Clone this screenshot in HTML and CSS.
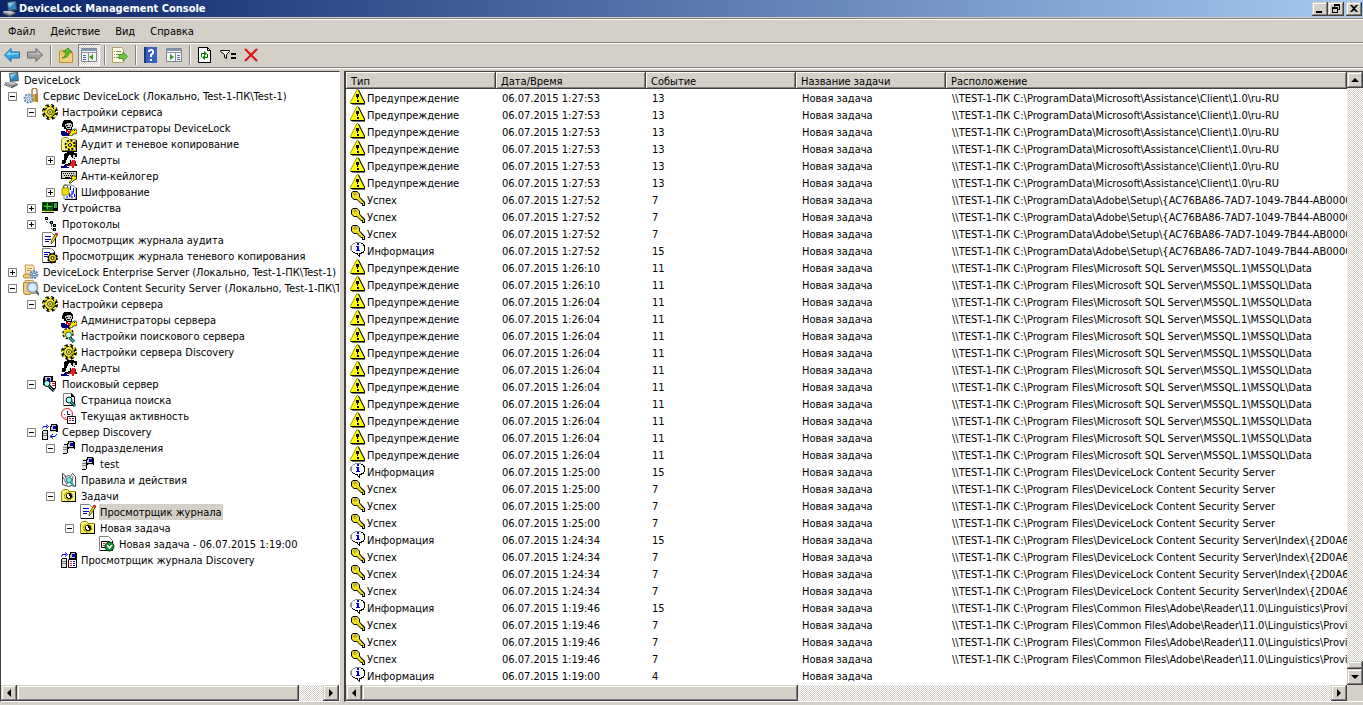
FILE: index.html
```html
<!DOCTYPE html>
<html lang="ru">
<head>
    <meta charset="UTF-8">
    <meta name="viewport" content="width=device-width, initial-scale=1.0">
    <title>DeviceLock Management Console</title>
    <link rel="stylesheet" href="styles.css">
</head>
<body>
    <!-- icon sprite -->
    <svg class="sprite" aria-hidden="true">
        <symbol id="i-pc" viewBox="0 0 16 16"><path d="M5 1l9-1 1 9-9 1z" fill="#555"/><path d="M6 2l7-1 1 7-7 1z" fill="#2f88c0"/><path d="M6 2l7-1-6 6z" fill="#7cc4e8"/><path d="M1 10h9l4 2-6 3-7-3z" fill="#8a8a8a"/><path d="M2 10h7l3 2-4 1-6-2z" fill="#c0c0c0"/><path d="M0 12l7 3 7-3v1l-6 3-8-3z" fill="#444"/></symbol>
        <symbol id="i-service" viewBox="0 0 16 16"><path d="M9 6V3q0-3 2.500-3T14 3v3" fill="none" stroke="#a8844c" stroke-width="1.500"/><path d="M7 6h8v8H8z" fill="#d8a850"/><path d="M12 6h3v8h-3z" fill="#b8842c"/><circle cx="5.500" cy="10.500" r="4" fill="#d4e4f4" stroke="#6c8cb0" stroke-width="2" stroke-dasharray="2 1"/><circle cx="5.500" cy="10.500" r="1.500" fill="#fff" stroke="#6c8cb0"/></symbol>
        <symbol id="i-gear" viewBox="0 0 16 16"><circle cx="8" cy="8" r="6.500" fill="none" stroke="#000" stroke-width="3" stroke-dasharray="3.100 2"/><circle cx="8" cy="8" r="6" fill="#000"/><circle cx="8" cy="8" r="6" fill="none" stroke="#e8e000" stroke-width="2.500" stroke-dasharray="2.100 2.610" stroke-dashoffset="1"/><circle cx="8" cy="8" r="5" fill="#f0e840"/><path d="M11 4l2 4-2 4-3 1 3-3V6z" fill="#a09800"/><circle cx="8" cy="8" r="2.500" fill="#fffca0" stroke="#404000"/><path d="M7 7h2v2H7z" fill="#808000"/><path d="M4 4h1v1H4zM11 4h1v1h-1zM4 11h1v1H4zM11 11h1v1h-1z"/></symbol>
        <symbol id="i-admin" viewBox="0 0 16 16"><path d="M2 1h1V0h7v1h1v1h1v5h-1v3H5V9H3V7H1V3h1z"/><path d="M4 4h2V3h4v1h1v3h-1v2H6V8H5V6H4z" fill="#c8c8c8"/><path d="M5 5h2v1H5zM9 5h1v1H9zM6 7h3v1H6z"/><path d="M0 11h4v1h2v1h2v3H1v-1H0z" fill="#000080"/><path d="M5 10h2v1h2v2H7v-1H5z" fill="#f00"/><path d="M9 10h3l1-1h2l1 2v2l-2 1h-2l-1 2H8v-2l2-2z" fill="#f8e800" stroke="#000" stroke-width=".7"/><path d="M13 10h1v1h-1z"/></symbol>
        <symbol id="i-folder-gear" viewBox="0 0 16 16"><path d="M.5 3.500l2-2h4l2 2h6v11H.5z" fill="#f8f4a0" stroke="#909000"/><path d="M15 4h1v12H1v-1h14z"/><circle cx="9" cy="9" r="4.500" fill="#f8e800" stroke="#000" stroke-width="2" stroke-dasharray="2 1.500"/><circle cx="9" cy="9" r="3.500" fill="#f8e800"/><circle cx="9" cy="9" r="1.500" fill="#fff" stroke="#000"/></symbol>
        <symbol id="i-alert" viewBox="0 0 16 16"><path d="M4 1h2V0h7v1h3v4h-2v2h-4v7H4v-2H1V8h2V2h1z"/><path d="M7 4h1V3h2v2h1v3H9v3H7v1H4v-1h1V8h1V6h1z" fill="#f4f4f4"/><path d="M12 3h2v3h-1v1h-2V6h1z" fill="#d8d8d8"/><path d="M0 14h3v-1h3v2h2v1H0z" fill="#000080"/><path d="M11 8h3v1h1v3h1v2h-3v2h-2v-2H8v-1h1v-1h1V9h1z" fill="#e02020"/><path d="M14 9h1v3h1v2h-2z" fill="#800000"/></symbol>
        <symbol id="i-keyboard" viewBox="0 0 16 16"><path d="M0 3h16v8H0z"/><path d="M1 4h14v6H1z" fill="#d4d0c8"/><path d="M2 5.500h12M3 7.500h10" stroke="#000" stroke-dasharray="1 1"/><path d="M4 9h5v1H4z"/><path d="M10 8h5l1 3-3 1-3 3H8l3-4z" fill="#f8e800" stroke="#000" stroke-width=".7"/></symbol>
        <symbol id="i-crypt" viewBox="0 0 16 16"><path d="M3 1h8l4 3v11H3z" fill="#fff" stroke="#808080"/><path d="M15 4h1v12H4v-1h11z"/><path d="M9 2h1v4H9zM12 4h1v4h-1zM8 9h1v4H8zM13 10h1v3h-1z" fill="#00f"/><path d="M10 8h2v2h-2v3h2M6 12v2" fill="none" stroke="#00f"/><path d="M2.500 5V2l1-1h2l1 1v3" fill="none" stroke="#606000"/><path d="M1 4h7v7H1z" fill="#f0e000" stroke="#808000" stroke-width=".7"/></symbol>
        <symbol id="i-devices" viewBox="0 0 16 16"><path d="M0 2h11v9H0z" fill="#006000"/><path d="M1 3h3v2H1zM6 3h3v2H6zM1 7h3v2H1z" fill="#000"/><path d="M2 6h8v1H2zM5 3h1v6H5z" fill="#40d040"/><path d="M11 2h5v9h-5z"/><path d="M12 3h3v5h-3z" fill="#40a040"/><path d="M3 11h8v1H3z" fill="#e8d800"/><path d="M0 12h12v1H0z"/></symbol>
        <symbol id="i-protocols" viewBox="0 0 16 16"><path d="M4.500 3v3.500H9M9.500 8v5.500H12M9 9.500h3" fill="none" stroke="#606060" stroke-dasharray="1 1"/><path d="M3 1h3v3H3zM8 5h3v3H8zM11 8h3v3h-3zM11 12h3v3h-3z"/><path d="M4 2h1v1H4zM9 6h1v1H9zM12 9h1v1h-1zM12 13h1v1h-1z" fill="#40e0e0"/></symbol>
        <symbol id="i-log" viewBox="0 0 16 16"><path d="M.5 .5h9l4 4v10H.5z" fill="#fff" stroke="#808080"/><path d="M13 5h1v10H1v-1h12z"/><path d="M3 4.500h6M3 7.500h6M3 9.500h4" stroke="#0000c0"/><path d="M14 1l2 1-5 8-2 2 .5-3.500z" fill="#f8e000" stroke="#000" stroke-width=".6"/><path d="M14 1l2 1-1 2-2-1z" fill="#e02020"/></symbol>
        <symbol id="i-shadow-log" viewBox="0 0 16 16"><path d="M.5 .5h9l3 3v11H.5z" fill="#fff" stroke="#808080"/><path d="M12 4h1v11H1v-1h11z"/><path d="M2 4.500h6M2 6.500h4M2 8.500h3" stroke="#0000c0"/><circle cx="10.500" cy="10" r="4.500" fill="#000"/><circle cx="10.500" cy="10" r="4.500" fill="none" stroke="#000" stroke-width="2" stroke-dasharray="2 1.500"/><circle cx="10.500" cy="10" r="3.500" fill="#e8d800"/><circle cx="10.500" cy="10" r="1.500" fill="#fff" stroke="#000"/></symbol>
        <symbol id="i-enterprise" viewBox="0 0 16 16"><path d="M2 1h8q2 1 1 3l1 7H3z" fill="#fbe6b8" stroke="#c09850"/><path d="M0 12q0-2 3-2h6v4H2q-2 0-2-2z" fill="#f0c878" stroke="#b08840"/><path d="M4 4.500h5M4 6.500h4" stroke="#c09850"/><circle cx="11" cy="10.500" r="3.500" fill="#b0d0f0" stroke="#6088b0" stroke-width="2" stroke-dasharray="2 1"/><circle cx="11" cy="10.500" r="1.500" fill="#fff" stroke="#406890"/></symbol>
        <symbol id="i-content" viewBox="0 0 16 16"><path d="M2 .5h8l1 2h3v11H1z" fill="#fbe6b8" stroke="#c09850"/><path d="M.5 2.500h7v12H2q-1 0-1.500-3z" fill="#f0c878" stroke="#b08840"/><circle cx="9.500" cy="7.500" r="5" fill="#d4ecfc" stroke="#8098b0" stroke-width="1.500"/><path d="M13 11l3 4" stroke="#505860" stroke-width="2"/></symbol>
        <symbol id="i-gear-search" viewBox="0 0 16 16"><circle cx="7" cy="5.500" r="4.500" fill="#e8d800" stroke="#000" stroke-width="2.500" stroke-dasharray="2 1.500"/><circle cx="7" cy="5.500" r="4.500" fill="#e8d800"/><circle cx="7.500" cy="7" r="3" fill="#c0ffff" stroke="#405050"/><path d="M9 10l4 4" stroke="#000" stroke-width="3"/><path d="M9 10l4 4" stroke="#30d0d0" stroke-width="1.500"/></symbol>
        <symbol id="i-search-server" viewBox="0 0 16 16"><path d="M2 0h9v9H1V3z"/><path d="M3 1h6v6H3z" fill="#c0c0c0"/><path d="M5 2h3v3H5z" fill="#0000c0"/><path d="M7.500 5.500h6v7h-6z" fill="#fff" stroke="#000"/><path d="M10 7.500h3M10 9.500h3" stroke="#e02020"/><circle cx="5" cy="7.500" r="3" fill="#a0ffff" stroke="#000"/><path d="M7 10l5 5" stroke="#000" stroke-width="3"/><path d="M7 10l5 5" stroke="#20d0d0"/></symbol>
        <symbol id="i-page-search" viewBox="0 0 16 16"><path d="M2.500 1.500h8l3 3v9h-11z" fill="#fff" stroke="#808080"/><path d="M14 5v9H3v-1h10V5zM10 1l4 4h-4z"/><circle cx="8" cy="8" r="3" fill="#a0ffff" stroke="#000"/><path d="M10 10l4 4" stroke="#000" stroke-width="3"/><path d="M10 10l4 4" stroke="#20c0c0" stroke-width="1.500"/></symbol>
        <symbol id="i-activity" viewBox="0 0 16 16"><circle cx="6" cy="6" r="5.500" fill="#fff" stroke="#e02020"/><path d="M6.500 3v3.500H9" fill="none" stroke="#000080"/><path d="M3 6h1v1H3zM4 9h1v1H4z" fill="#e02020"/><path d="M6.500 8.500h8v7h-8z" fill="#fff" stroke="#000"/><path d="M8 10.500h2M8 12.500h2" stroke="#e02020"/><path d="M11 10.500h2M11 12.500h2" stroke="#0000c0"/></symbol>
        <symbol id="i-discovery" viewBox="0 0 16 16"><path d="M9 0h6v1h1v7H8V2h1z"/><path d="M10 1h4v5h-5V3h1z" fill="#c0c0c0"/><path d="M11 2h3v3h-3z" fill="#0000c0"/><path d="M8 7h6v1H8z" fill="#d0d0d0"/><path d="M1 6h5v10H0V7h1z"/><path d="M1 7h4v8H1z" fill="#e0e0e0"/><path d="M1 9.500h4M1 11.500h4" stroke="#808080"/><path d="M.5 4.500l1-2H5M4 .5l2.500 2L4 4.500M15 10l-2 2.500h-4M11 10l-3 2.500 3 2" fill="none" stroke="#00f"/></symbol>
        <symbol id="i-units" viewBox="0 0 16 16"><path d="M7 1h6v1h1v7H6V3h1z"/><path d="M8 2h4v5H7V4h1z" fill="#c0c0c0"/><path d="M9 3h3v3H9z" fill="#0000c0"/><path d="M8 8h5v1H8z" fill="#d0d0d0"/><path d="M3 4h4v9H6v1H2V5h1z"/><path d="M2 5h4v8H2z" fill="#e0e0e0"/><path d="M2 7.500h4M2 9.500h4" stroke="#808080"/></symbol>
        <symbol id="i-rules" viewBox="0 0 16 16"><path d="M1.500 1.500l4 3 2-1 2 1 2-3 3 3v10l-4-1-3 1-6-2z" fill="#fff" stroke="#404040"/><path d="M2 5l4 8M4 4l3 8M12 4l-1 7" fill="none" stroke="#404040" stroke-width=".8"/><circle cx="8" cy="8" r="2.500" fill="#80f0f0" stroke="#208080"/><path d="M9 10l4 4" stroke="#20a0a0" stroke-width="2"/></symbol>
        <symbol id="i-tasks" viewBox="0 0 16 16"><path d="M.5 3.500l2-2h4l2 2h6v10H.5z" fill="#f8f080" stroke="#909000"/><path d="M14 4h1v10H1v-1h13z"/><circle cx="7.500" cy="8" r="4" fill="#f0e000" stroke="#808000" stroke-dasharray="2 1"/><circle cx="8" cy="8" r="3"/><path d="M6 6h2v2h1v2H7V9H6z" fill="#fff"/></symbol>
        <symbol id="i-task-ok" viewBox="0 0 16 16"><path d="M.5 .5h9l4 4v10H.5z" fill="#fff" stroke="#808080"/><path d="M13 5h1v10H1v-1h12z"/><path d="M2.500 5.500h8v6h-8z" fill="#fff" stroke="#000"/><path d="M4 7h2v1H4zM4 9h2v1H4z" fill="#e02020"/><circle cx="10.500" cy="10.500" r="4.500" fill="#109030" stroke="#004010"/><path d="M8 9l2.500 3L13 9" fill="none" stroke="#fff" stroke-width="1.500"/></symbol>
        <symbol id="i-discovery-log" viewBox="0 0 16 16"><path d="M9 0h6v1h1v7H8V2h1z"/><path d="M10 1h4v5h-5V3h1z" fill="#c0c0c0"/><path d="M11 2h3v3h-3z" fill="#0000c0"/><path d="M1 6h5v10H0V7h1z"/><path d="M1 7h4v8H1z" fill="#e0e0e0"/><path d="M1 9.500h4M1 11.500h4" stroke="#808080"/><path d="M.5 4.500l1-2H5M4 .5l2.500 2L4 4.500" fill="none" stroke="#00f"/><path d="M7.500 7.500h8v8h-8z" fill="#fff" stroke="#000"/><path d="M9 9.500h2M9 11.500h2M9 13.500h2" stroke="#e02020"/><path d="M12 9.500h2M12 11.500h2M12 13.500h2" stroke="#0000c0"/></symbol>

        <symbol id="i-warn" viewBox="0 0 16 16"><path d="M8 2l7 12v2H2z" fill="#707070"/><path d="M7 .5h1L14.500 13v1.500H.5V13z" fill="#ff0" stroke="#a0a000"/><path d="M8.500 1l6 12v1.500H1" fill="none" stroke="#000"/><path d="M6 5h3v3H8v2H7V8H6zM7 11h2v2H7z"/></symbol>
        <symbol id="i-key" viewBox="0 0 16 16"><path d="M3 0h4l3 3v3l5 5v4h-3v-2h-1L7 9H4L1 6V2z"/><path d="M3 1h4l2 2v3l5 6v2h-1v-2h-2L7 8H4L2 6V2z" fill="#f0e020"/><path d="M4 2h2v2H4z" fill="#fff" stroke="#605800" stroke-width=".6"/></symbol>
        <symbol id="i-info" viewBox="0 0 16 16"><path d="M5 0h6v1h2v1h1v1h1v6h-1v2h-2v1h-2v3H9v-1H8v-1H7v-1H5v-1H3v-1H2V9H1V3h1V2h1V1h2z" fill="#000"/><path d="M5 0h6v1H5zM3 1h2v1H3zM2 2h1v1H2zM1 3h1v6H1zM0 4h1v4H0z" fill="#909090"/><path d="M5 1h6v1h2v2h1v5h-1v1h-2v1H9v2H8v-2H5v-1H3V9H2V3h1V2h2z" fill="#fff"/><path d="M7 1h2v2H7zM6 4h3v4h1v1H6V8h1V5H6z" fill="#00f"/></symbol>

        <symbol id="i-back" viewBox="0 0 16 16"><path d="M.5 8L7 1.500v3.500h8.500v6H7v3.500z" fill="#38a8e8" stroke="#1870a8"/><path d="M2 8l4-4v2h9v1z" fill="#90d8f8"/></symbol>
        <symbol id="i-forward" viewBox="0 0 16 16"><path d="M15.500 8L9 1.500v3.500H.5v6H9v3.500z" fill="#a0a0a0" stroke="#686868"/><path d="M14 8l-4-4v2H1v1z" fill="#c0c0c0"/></symbol>
        <symbol id="i-up" viewBox="0 0 16 16"><path d="M1.500 4.500l2-1h5l2 2h4v10h-13z" fill="#e8c468" stroke="#b89030"/><path d="M2 8h12v7H2z" fill="#f0d080"/><path d="M4 11q4-1 4-6H5l5-4 4 4h-3q0 6-7 6z" fill="#58c020" stroke="#308010" stroke-width=".7"/></symbol>
        <symbol id="i-tree-pane" viewBox="0 0 16 16"><path d="M.5 1.500h15v13H.5z" fill="#f4f4f4" stroke="#808898"/><path d="M1 2h14v2H1z" fill="#8098b8"/><path d="M1 5.500h14M7.500 6v8" stroke="#909090"/><path d="M2 8.500h3M2 10.500h3M2 12.500h3" stroke="#5070a0"/><path d="M12 7v6l-4-3z" fill="#30a020"/></symbol>
        <symbol id="i-export" viewBox="0 0 16 16"><path d="M.5 .5h9l2 2v13H.5z" fill="#fffbe0" stroke="#b0a070"/><path d="M2 4.500h1M4 4.500h5M2 7.500h1M4 7.500h4M2 10.500h1M4 10.500h4" stroke="#808080"/><path d="M7 7.500h4V5l4.500 4.500L11 14v-2.500H7z" fill="#70c838" stroke="#48982c"/></symbol>
        <symbol id="i-help" viewBox="0 0 16 16"><path d="M1 0h13v16H1z" fill="#3860c0"/><path d="M1 0h2v16H1z" fill="#183878"/><path d="M6 5V4q2.500-2.500 4 0v2L8 8v2M8 12v2" fill="none" stroke="#fff" stroke-width="2"/></symbol>
        <symbol id="i-action-pane" viewBox="0 0 16 16"><path d="M.5 1.500h15v13H.5z" fill="#f4f4f4" stroke="#808898"/><path d="M1 2h14v2H1z" fill="#8098b8"/><path d="M1 5.500h14M9.500 6v8" stroke="#909090"/><path d="M11 8.500h3M11 10.500h3M11 12.500h3" stroke="#5070a0"/><path d="M4 7v6l4-3z" fill="#30a020"/></symbol>
        <symbol id="i-refresh" viewBox="0 0 16 16"><path d="M1.500 .5h9l3 3v12h-12z" fill="#fff" stroke="#000"/><path d="M10.500 0v3.500H14" fill="none" stroke="#000"/><path d="M4.500 10V6.500H8M10.500 7v3.500H7" fill="none" stroke="#008000"/><path d="M7 4v5l3-2.500zM8 8v5l-3-2.500z" fill="#008000"/></symbol>
        <symbol id="i-filter" viewBox="0 0 16 16"><path d="M.5 3.500h9v1l-3 3v4l-2-1v-3l-4-3z" fill="#fff" stroke="#000"/><path d="M11 6h5v2h-5zM11 10h5v2h-5z"/></symbol>
        <symbol id="i-delete" viewBox="0 0 16 16"><path d="M2 2l12 12M14 2L2 14" stroke="#e01010" stroke-width="2"/></symbol>

        <symbol id="i-plus" viewBox="0 0 9 9"><path d="M.5 .5h8v8h-8z" fill="#fff" stroke="#808080"/><path d="M2 4h5v1H2zM4 2h1v5H4z"/></symbol>
        <symbol id="i-minus" viewBox="0 0 9 9"><path d="M.5 .5h8v8h-8z" fill="#fff" stroke="#808080"/><path d="M2 4h5v1H2z"/></symbol>
        <symbol id="i-arr-left" viewBox="0 0 8 8"><path d="M6 0v8L2 4z"/></symbol>
        <symbol id="i-arr-right" viewBox="0 0 8 8"><path d="M2 0v8l4-4z"/></symbol>
        <symbol id="i-arr-up" viewBox="0 0 8 8"><path d="M0 6h8L4 2z"/></symbol>
        <symbol id="i-arr-down" viewBox="0 0 8 8"><path d="M0 2h8L4 6z"/></symbol>
        <symbol id="i-win-min" viewBox="0 0 10 10"><path d="M1 7h6v2H1z"/></symbol>
        <symbol id="i-win-restore" viewBox="0 0 10 10"><path d="M3 0h6v6H7V5h1V2H4v1H3zM1 3h6v6H1zM2 5v3h4V5z" fill-rule="evenodd"/></symbol>
        <symbol id="i-win-close" viewBox="0 0 10 10"><path d="M1 1h2l2 2 2-2h2L6 4.500 9 8H7L5 6 3 8H1l3-3.500z"/></symbol>
    </svg>

    <header class="title-bar">
        <svg class="icon"><use href="#i-pc"/></svg>
        <h1>DeviceLock Management Console</h1>
        <button type="button" class="win-btn" aria-label="Minimize"><svg><use href="#i-win-min"/></svg></button>
        <button type="button" class="win-btn" aria-label="Restore"><svg><use href="#i-win-restore"/></svg></button>
        <button type="button" class="win-btn win-close" aria-label="Close"><svg><use href="#i-win-close"/></svg></button>
    </header>

    <nav class="menu-bar">
        <button type="button">Файл</button>
        <button type="button">Действие</button>
        <button type="button">Вид</button>
        <button type="button">Справка</button>
    </nav>

    <div class="toolbar" role="toolbar">
        <button type="button" aria-label="Back"><svg class="icon"><use href="#i-back"/></svg></button>
        <button type="button" aria-label="Forward"><svg class="icon"><use href="#i-forward"/></svg></button>
        <span class="sep"></span>
        <button type="button" aria-label="Up"><svg class="icon"><use href="#i-up"/></svg></button>
        <button type="button" class="pressed" aria-label="Console tree"><svg class="icon"><use href="#i-tree-pane"/></svg></button>
        <span class="sep"></span>
        <button type="button" aria-label="Export"><svg class="icon"><use href="#i-export"/></svg></button>
        <span class="sep"></span>
        <button type="button" aria-label="Help"><svg class="icon"><use href="#i-help"/></svg></button>
        <button type="button" aria-label="Action pane"><svg class="icon"><use href="#i-action-pane"/></svg></button>
        <span class="sep"></span>
        <button type="button" aria-label="Refresh"><svg class="icon"><use href="#i-refresh"/></svg></button>
        <button type="button" aria-label="Filter"><svg class="icon"><use href="#i-filter"/></svg></button>
        <button type="button" aria-label="Clear"><svg class="icon"><use href="#i-delete"/></svg></button>
    </div>

    <main class="workspace">
        <section class="pane tree-pane">
            <div class="tree">
                <div class="node root"><svg class="icon"><use href="#i-pc"/></svg><a href="#">DeviceLock</a></div>
                <ul>
                    <li>
                        <div class="node"><button type="button" class="toggle" aria-label="Collapse"><svg><use href="#i-minus"/></svg></button><svg class="icon"><use href="#i-service"/></svg><a href="#">Сервис DeviceLock (Локально, Test-1-ПК\Test-1)</a></div>
                        <ul>
                            <li>
                                <div class="node"><button type="button" class="toggle" aria-label="Collapse"><svg><use href="#i-minus"/></svg></button><svg class="icon"><use href="#i-gear"/></svg><a href="#">Настройки сервиса</a></div>
                                <ul>
                                    <li><div class="node leaf"><svg class="icon"><use href="#i-admin"/></svg><a href="#">Администраторы DeviceLock</a></div></li>
                                    <li><div class="node leaf"><svg class="icon"><use href="#i-folder-gear"/></svg><a href="#">Аудит и теневое копирование</a></div></li>
                                    <li><div class="node"><button type="button" class="toggle" aria-label="Expand"><svg><use href="#i-plus"/></svg></button><svg class="icon"><use href="#i-alert"/></svg><a href="#">Алерты</a></div></li>
                                    <li><div class="node leaf"><svg class="icon"><use href="#i-keyboard"/></svg><a href="#">Анти-кейлогер</a></div></li>
                                    <li><div class="node"><button type="button" class="toggle" aria-label="Expand"><svg><use href="#i-plus"/></svg></button><svg class="icon"><use href="#i-crypt"/></svg><a href="#">Шифрование</a></div></li>
                                </ul>
                            </li>
                            <li><div class="node"><button type="button" class="toggle" aria-label="Expand"><svg><use href="#i-plus"/></svg></button><svg class="icon"><use href="#i-devices"/></svg><a href="#">Устройства</a></div></li>
                            <li><div class="node"><button type="button" class="toggle" aria-label="Expand"><svg><use href="#i-plus"/></svg></button><svg class="icon"><use href="#i-protocols"/></svg><a href="#">Протоколы</a></div></li>
                            <li><div class="node leaf"><svg class="icon"><use href="#i-log"/></svg><a href="#">Просмотрщик журнала аудита</a></div></li>
                            <li><div class="node leaf"><svg class="icon"><use href="#i-shadow-log"/></svg><a href="#">Просмотрщик журнала теневого копирования</a></div></li>
                        </ul>
                    </li>
                    <li><div class="node"><button type="button" class="toggle" aria-label="Expand"><svg><use href="#i-plus"/></svg></button><svg class="icon"><use href="#i-enterprise"/></svg><a href="#">DeviceLock Enterprise Server (Локально, Test-1-ПК\Test-1)</a></div></li>
                    <li>
                        <div class="node"><button type="button" class="toggle" aria-label="Collapse"><svg><use href="#i-minus"/></svg></button><svg class="icon"><use href="#i-content"/></svg><a href="#">DeviceLock Content Security Server (Локально, Test-1-ПК\Test-1)</a></div>
                        <ul>
                            <li>
                                <div class="node"><button type="button" class="toggle" aria-label="Collapse"><svg><use href="#i-minus"/></svg></button><svg class="icon"><use href="#i-gear"/></svg><a href="#">Настройки сервера</a></div>
                                <ul>
                                    <li><div class="node leaf"><svg class="icon"><use href="#i-admin"/></svg><a href="#">Администраторы сервера</a></div></li>
                                    <li><div class="node leaf"><svg class="icon"><use href="#i-gear-search"/></svg><a href="#">Настройки поискового сервера</a></div></li>
                                    <li><div class="node leaf"><svg class="icon"><use href="#i-gear"/></svg><a href="#">Настройки сервера Discovery</a></div></li>
                                    <li><div class="node leaf"><svg class="icon"><use href="#i-alert"/></svg><a href="#">Алерты</a></div></li>
                                </ul>
                            </li>
                            <li>
                                <div class="node"><button type="button" class="toggle" aria-label="Collapse"><svg><use href="#i-minus"/></svg></button><svg class="icon"><use href="#i-search-server"/></svg><a href="#">Поисковый сервер</a></div>
                                <ul>
                                    <li><div class="node leaf"><svg class="icon"><use href="#i-page-search"/></svg><a href="#">Страница поиска</a></div></li>
                                    <li><div class="node leaf"><svg class="icon"><use href="#i-activity"/></svg><a href="#">Текущая активность</a></div></li>
                                </ul>
                            </li>
                            <li>
                                <div class="node"><button type="button" class="toggle" aria-label="Collapse"><svg><use href="#i-minus"/></svg></button><svg class="icon"><use href="#i-discovery"/></svg><a href="#">Сервер Discovery</a></div>
                                <ul>
                                    <li>
                                        <div class="node"><button type="button" class="toggle" aria-label="Collapse"><svg><use href="#i-minus"/></svg></button><svg class="icon"><use href="#i-units"/></svg><a href="#">Подразделения</a></div>
                                        <ul>
                                            <li><div class="node leaf"><svg class="icon"><use href="#i-units"/></svg><a href="#">test</a></div></li>
                                        </ul>
                                    </li>
                                    <li><div class="node leaf"><svg class="icon"><use href="#i-rules"/></svg><a href="#">Правила и действия</a></div></li>
                                    <li>
                                        <div class="node"><button type="button" class="toggle" aria-label="Collapse"><svg><use href="#i-minus"/></svg></button><svg class="icon"><use href="#i-tasks"/></svg><a href="#">Задачи</a></div>
                                        <ul>
                                            <li><div class="node leaf"><svg class="icon"><use href="#i-log"/></svg><a href="#" class="selected">Просмотрщик журнала</a></div></li>
                                            <li>
                                                <div class="node"><button type="button" class="toggle" aria-label="Collapse"><svg><use href="#i-minus"/></svg></button><svg class="icon"><use href="#i-tasks"/></svg><a href="#">Новая задача</a></div>
                                                <ul>
                                                    <li><div class="node leaf"><svg class="icon"><use href="#i-task-ok"/></svg><a href="#">Новая задача - 06.07.2015 1:19:00</a></div></li>
                                                </ul>
                                            </li>
                                        </ul>
                                    </li>
                                    <li><div class="node leaf"><svg class="icon"><use href="#i-discovery-log"/></svg><a href="#">Просмотрщик журнала Discovery</a></div></li>
                                </ul>
                            </li>
                        </ul>
                    </li>
                </ul>
            </div>
            <div class="scroll-x">
                <button type="button" aria-label="Scroll left"><svg><use href="#i-arr-left"/></svg></button>
                <div class="track"><div class="thumb thumb-tree"></div></div>
                <button type="button" aria-label="Scroll right"><svg><use href="#i-arr-right"/></svg></button>
            </div>
        </section>

        <section class="pane list-pane">
            <div class="list">
                <table>
                    <thead>
                        <tr><th>Тип</th><th>Дата/Время</th><th>Событие</th><th>Название задачи</th><th class="location">Расположение</th></tr>
                    </thead>
                    <tbody>
                        <tr><td><svg class="icon"><use href="#i-warn"/></svg>Предупреждение</td><td>06.07.2015 1:27:53</td><td>13</td><td>Новая задача</td><td>\\TEST-1-ПК C:\ProgramData\Microsoft\Assistance\Client\1.0\ru-RU</td></tr>
                        <tr><td><svg class="icon"><use href="#i-warn"/></svg>Предупреждение</td><td>06.07.2015 1:27:53</td><td>13</td><td>Новая задача</td><td>\\TEST-1-ПК C:\ProgramData\Microsoft\Assistance\Client\1.0\ru-RU</td></tr>
                        <tr><td><svg class="icon"><use href="#i-warn"/></svg>Предупреждение</td><td>06.07.2015 1:27:53</td><td>13</td><td>Новая задача</td><td>\\TEST-1-ПК C:\ProgramData\Microsoft\Assistance\Client\1.0\ru-RU</td></tr>
                        <tr><td><svg class="icon"><use href="#i-warn"/></svg>Предупреждение</td><td>06.07.2015 1:27:53</td><td>13</td><td>Новая задача</td><td>\\TEST-1-ПК C:\ProgramData\Microsoft\Assistance\Client\1.0\ru-RU</td></tr>
                        <tr><td><svg class="icon"><use href="#i-warn"/></svg>Предупреждение</td><td>06.07.2015 1:27:53</td><td>13</td><td>Новая задача</td><td>\\TEST-1-ПК C:\ProgramData\Microsoft\Assistance\Client\1.0\ru-RU</td></tr>
                        <tr><td><svg class="icon"><use href="#i-warn"/></svg>Предупреждение</td><td>06.07.2015 1:27:53</td><td>13</td><td>Новая задача</td><td>\\TEST-1-ПК C:\ProgramData\Microsoft\Assistance\Client\1.0\ru-RU</td></tr>
                        <tr><td><svg class="icon"><use href="#i-key"/></svg>Успех</td><td>06.07.2015 1:27:52</td><td>7</td><td>Новая задача</td><td>\\TEST-1-ПК C:\ProgramData\Adobe\Setup\{AC76BA86-7AD7-1049-7B44-AB0000000001}</td></tr>
                        <tr><td><svg class="icon"><use href="#i-key"/></svg>Успех</td><td>06.07.2015 1:27:52</td><td>7</td><td>Новая задача</td><td>\\TEST-1-ПК C:\ProgramData\Adobe\Setup\{AC76BA86-7AD7-1049-7B44-AB0000000001}</td></tr>
                        <tr><td><svg class="icon"><use href="#i-key"/></svg>Успех</td><td>06.07.2015 1:27:52</td><td>7</td><td>Новая задача</td><td>\\TEST-1-ПК C:\ProgramData\Adobe\Setup\{AC76BA86-7AD7-1049-7B44-AB0000000001}</td></tr>
                        <tr><td><svg class="icon"><use href="#i-info"/></svg>Информация</td><td>06.07.2015 1:27:52</td><td>15</td><td>Новая задача</td><td>\\TEST-1-ПК C:\ProgramData\Adobe\Setup\{AC76BA86-7AD7-1049-7B44-AB0000000001}</td></tr>
                        <tr><td><svg class="icon"><use href="#i-warn"/></svg>Предупреждение</td><td>06.07.2015 1:26:10</td><td>11</td><td>Новая задача</td><td>\\TEST-1-ПК C:\Program Files\Microsoft SQL Server\MSSQL.1\MSSQL\Data</td></tr>
                        <tr><td><svg class="icon"><use href="#i-warn"/></svg>Предупреждение</td><td>06.07.2015 1:26:10</td><td>11</td><td>Новая задача</td><td>\\TEST-1-ПК C:\Program Files\Microsoft SQL Server\MSSQL.1\MSSQL\Data</td></tr>
                        <tr><td><svg class="icon"><use href="#i-warn"/></svg>Предупреждение</td><td>06.07.2015 1:26:04</td><td>11</td><td>Новая задача</td><td>\\TEST-1-ПК C:\Program Files\Microsoft SQL Server\MSSQL.1\MSSQL\Data</td></tr>
                        <tr><td><svg class="icon"><use href="#i-warn"/></svg>Предупреждение</td><td>06.07.2015 1:26:04</td><td>11</td><td>Новая задача</td><td>\\TEST-1-ПК C:\Program Files\Microsoft SQL Server\MSSQL.1\MSSQL\Data</td></tr>
                        <tr><td><svg class="icon"><use href="#i-warn"/></svg>Предупреждение</td><td>06.07.2015 1:26:04</td><td>11</td><td>Новая задача</td><td>\\TEST-1-ПК C:\Program Files\Microsoft SQL Server\MSSQL.1\MSSQL\Data</td></tr>
                        <tr><td><svg class="icon"><use href="#i-warn"/></svg>Предупреждение</td><td>06.07.2015 1:26:04</td><td>11</td><td>Новая задача</td><td>\\TEST-1-ПК C:\Program Files\Microsoft SQL Server\MSSQL.1\MSSQL\Data</td></tr>
                        <tr><td><svg class="icon"><use href="#i-warn"/></svg>Предупреждение</td><td>06.07.2015 1:26:04</td><td>11</td><td>Новая задача</td><td>\\TEST-1-ПК C:\Program Files\Microsoft SQL Server\MSSQL.1\MSSQL\Data</td></tr>
                        <tr><td><svg class="icon"><use href="#i-warn"/></svg>Предупреждение</td><td>06.07.2015 1:26:04</td><td>11</td><td>Новая задача</td><td>\\TEST-1-ПК C:\Program Files\Microsoft SQL Server\MSSQL.1\MSSQL\Data</td></tr>
                        <tr><td><svg class="icon"><use href="#i-warn"/></svg>Предупреждение</td><td>06.07.2015 1:26:04</td><td>11</td><td>Новая задача</td><td>\\TEST-1-ПК C:\Program Files\Microsoft SQL Server\MSSQL.1\MSSQL\Data</td></tr>
                        <tr><td><svg class="icon"><use href="#i-warn"/></svg>Предупреждение</td><td>06.07.2015 1:26:04</td><td>11</td><td>Новая задача</td><td>\\TEST-1-ПК C:\Program Files\Microsoft SQL Server\MSSQL.1\MSSQL\Data</td></tr>
                        <tr><td><svg class="icon"><use href="#i-warn"/></svg>Предупреждение</td><td>06.07.2015 1:26:04</td><td>11</td><td>Новая задача</td><td>\\TEST-1-ПК C:\Program Files\Microsoft SQL Server\MSSQL.1\MSSQL\Data</td></tr>
                        <tr><td><svg class="icon"><use href="#i-warn"/></svg>Предупреждение</td><td>06.07.2015 1:26:04</td><td>11</td><td>Новая задача</td><td>\\TEST-1-ПК C:\Program Files\Microsoft SQL Server\MSSQL.1\MSSQL\Data</td></tr>
                        <tr><td><svg class="icon"><use href="#i-info"/></svg>Информация</td><td>06.07.2015 1:25:00</td><td>15</td><td>Новая задача</td><td>\\TEST-1-ПК C:\Program Files\DeviceLock Content Security Server</td></tr>
                        <tr><td><svg class="icon"><use href="#i-key"/></svg>Успех</td><td>06.07.2015 1:25:00</td><td>7</td><td>Новая задача</td><td>\\TEST-1-ПК C:\Program Files\DeviceLock Content Security Server</td></tr>
                        <tr><td><svg class="icon"><use href="#i-key"/></svg>Успех</td><td>06.07.2015 1:25:00</td><td>7</td><td>Новая задача</td><td>\\TEST-1-ПК C:\Program Files\DeviceLock Content Security Server</td></tr>
                        <tr><td><svg class="icon"><use href="#i-key"/></svg>Успех</td><td>06.07.2015 1:25:00</td><td>7</td><td>Новая задача</td><td>\\TEST-1-ПК C:\Program Files\DeviceLock Content Security Server</td></tr>
                        <tr><td><svg class="icon"><use href="#i-info"/></svg>Информация</td><td>06.07.2015 1:24:34</td><td>15</td><td>Новая задача</td><td>\\TEST-1-ПК C:\Program Files\DeviceLock Content Security Server\Index\{2D0A65</td></tr>
                        <tr><td><svg class="icon"><use href="#i-key"/></svg>Успех</td><td>06.07.2015 1:24:34</td><td>7</td><td>Новая задача</td><td>\\TEST-1-ПК C:\Program Files\DeviceLock Content Security Server\Index\{2D0A65</td></tr>
                        <tr><td><svg class="icon"><use href="#i-key"/></svg>Успех</td><td>06.07.2015 1:24:34</td><td>7</td><td>Новая задача</td><td>\\TEST-1-ПК C:\Program Files\DeviceLock Content Security Server\Index\{2D0A65</td></tr>
                        <tr><td><svg class="icon"><use href="#i-key"/></svg>Успех</td><td>06.07.2015 1:24:34</td><td>7</td><td>Новая задача</td><td>\\TEST-1-ПК C:\Program Files\DeviceLock Content Security Server\Index\{2D0A65</td></tr>
                        <tr><td><svg class="icon"><use href="#i-info"/></svg>Информация</td><td>06.07.2015 1:19:46</td><td>15</td><td>Новая задача</td><td>\\TEST-1-ПК C:\Program Files\Common Files\Adobe\Reader\11.0\Linguistics\Providers</td></tr>
                        <tr><td><svg class="icon"><use href="#i-key"/></svg>Успех</td><td>06.07.2015 1:19:46</td><td>7</td><td>Новая задача</td><td>\\TEST-1-ПК C:\Program Files\Common Files\Adobe\Reader\11.0\Linguistics\Providers</td></tr>
                        <tr><td><svg class="icon"><use href="#i-key"/></svg>Успех</td><td>06.07.2015 1:19:46</td><td>7</td><td>Новая задача</td><td>\\TEST-1-ПК C:\Program Files\Common Files\Adobe\Reader\11.0\Linguistics\Providers</td></tr>
                        <tr><td><svg class="icon"><use href="#i-key"/></svg>Успех</td><td>06.07.2015 1:19:46</td><td>7</td><td>Новая задача</td><td>\\TEST-1-ПК C:\Program Files\Common Files\Adobe\Reader\11.0\Linguistics\Providers</td></tr>
                        <tr><td><svg class="icon"><use href="#i-info"/></svg>Информация</td><td>06.07.2015 1:19:00</td><td>4</td><td>Новая задача</td><td></td></tr>
                    </tbody>
                </table>
            </div>
            <div class="scroll-y">
                <button type="button" aria-label="Scroll up"><svg><use href="#i-arr-up"/></svg></button>
                <div class="track"><div class="thumb"></div></div>
                <button type="button" aria-label="Scroll down"><svg><use href="#i-arr-down"/></svg></button>
            </div>
            <div class="scroll-x">
                <button type="button" aria-label="Scroll left"><svg><use href="#i-arr-left"/></svg></button>
                <div class="track"><div class="thumb thumb-list"></div></div>
                <button type="button" aria-label="Scroll right"><svg><use href="#i-arr-right"/></svg></button>
            </div>
        </section>
    </main>
</body>
</html>
```
FILE: styles.css
```css
* {
    box-sizing: border-box;
}

body {
    display: flex;
    flex-direction: column;
    height: 100vh;
    margin: 0;
    overflow: hidden;
    background-color: #d4d0c8;
    color: #000;
    font-family: "DejaVu Sans Condensed", "Noto Sans", sans-serif;
    font-size: 11px;
    line-height: 16px;
}

button {
    display: flex;
    align-items: center;
    justify-content: center;
    padding: 0;
    border: none;
    background-color: #d4d0c8;
    color: #000;
    font: inherit;
}

a {
    color: inherit;
    text-decoration: none;
}

.sprite {
    position: absolute;
    width: 0;
    height: 0;
}

.icon {
    flex: none;
    width: 16px;
    height: 16px;
}

/* Title bar */
.title-bar {
    display: flex;
    align-items: center;
    height: 17px;
    flex: none;
    padding: 0 1px 0 2px;
    background: linear-gradient(to right, #0a246a, #a6caf0);
    color: #fff;
}

.title-bar h1 {
    flex: 1;
    margin: 0 0 0 1px;
    font-size: 11px;
    line-height: 16px;
}

.win-btn,
.scroll-x button,
.scroll-y button,
.thumb {
    background-color: #d4d0c8;
    box-shadow: inset -1px -1px #404040, inset 1px 1px #d4d0c8, inset -2px -2px #808080, inset 2px 2px #fff;
}

.win-btn {
    width: 16px;
    height: 14px;
}

.win-btn svg {
    width: 10px;
    height: 10px;
}

.win-close {
    margin-left: 2px;
}

/* Menu and toolbar */
.menu-bar,
.toolbar {
    display: flex;
    align-items: center;
    flex: none;
    border-top: 1px solid #808080;
    box-shadow: inset 0 1px #fff;
}

.menu-bar {
    height: 24px;
    margin-top: 1px;
    padding-top: 2px;
}

.menu-bar button {
    padding: 0 7px 0 8px;
}

.toolbar {
    gap: 1px;
    height: 25px;
    padding-left: 1px;
}

.toolbar button {
    width: 22px;
    height: 22px;
}

.toolbar .pressed {
    background: repeating-conic-gradient(#fff 0 25%, #d4d0c8 0 50%) 0 0 / 2px 2px;
    box-shadow: inset 1px 1px #808080, inset -1px -1px #fff;
}

.sep {
    width: 2px;
    height: 20px;
    margin: 0 2px 0 3px;
    border-left: 1px solid #808080;
    border-right: 1px solid #fff;
}

/* Panes */
.workspace {
    display: grid;
    grid-template-columns: 340px 1fr;
    gap: 4px;
    flex: 1;
    min-height: 0;
    padding: 3px 0;
    border-top: 1px solid #808080;
    box-shadow: inset 0 1px #fff;
}

.pane {
    display: grid;
    min-width: 0;
    min-height: 0;
    border-top: 1px solid #404040;
    border-bottom: 1px solid #fff;
    border-left: 1px solid #404040;
    background-color: #fff;
}

.tree-pane {
    grid-template-rows: 1fr 16px;
    border-right: 1px solid #fff;
}

.list-pane {
    grid-template-columns: 1fr 16px;
    grid-template-rows: 1fr 16px;
    border-left-width: 2px;
    background-color: #d4d0c8;
}

/* Tree */
.tree {
    overflow: hidden;
}

.tree ul {
    margin: 0;
    padding: 0 0 0 19px;
    list-style: none;
}

.tree > ul {
    padding-left: 3px;
}

.node {
    display: flex;
    align-items: center;
    height: 16px;
    white-space: nowrap;
}

.node.root {
    padding-left: 3px;
}

.node.leaf {
    padding-left: 19px;
}

.node a {
    margin-left: 3px;
    padding: 2px 1px 0;
    line-height: 14px;
}

.node .selected {
    background-color: #d4d0c8;
}

.toggle {
    flex: none;
    width: 9px;
    height: 9px;
    margin: 0 6px 0 4px;
}

.toggle svg {
    width: 9px;
    height: 9px;
}

/* Event list */
.list {
    overflow: hidden;
    background-color: #fff;
}

table {
    width: 100%;
    table-layout: fixed;
    border-collapse: separate;
    border-spacing: 0;
}

th {
    width: 150px;
    height: 17px;
    padding: 2px 5px 0;
    background-color: #d4d0c8;
    box-shadow: inset -1px -1px #404040, inset 1px 1px #fff, inset -2px -2px #808080;
    font-weight: normal;
    line-height: 15px;
    text-align: left;
}

th.location {
    width: auto;
}

td {
    height: 17px;
    padding: 2px 0 0 6px;
    overflow: hidden;
    line-height: 15px;
    white-space: nowrap;
}

td:first-child {
    padding-left: 4px;
}

td .icon {
    margin: -2px 1px 0 0;
    vertical-align: top;
}

/* Scroll bars */
.scroll-x,
.scroll-y {
    display: flex;
    min-width: 0;
}

.scroll-y {
    flex-direction: column;
}

.scroll-x button,
.scroll-y button {
    flex: none;
    width: 16px;
    height: 16px;
}

.scroll-x svg,
.scroll-y svg {
    width: 8px;
    height: 8px;
}

.track {
    display: flex;
    flex: 1;
    background: repeating-conic-gradient(#fff 0 25%, #d4d0c8 0 50%) 0 0 / 2px 2px;
}

.scroll-y .track {
    align-items: flex-end;
}

.scroll-y .thumb {
    width: 16px;
    height: 8px;
}

.thumb-tree {
    width: 92%;
}

.thumb-list {
    width: 45%;
}
```
